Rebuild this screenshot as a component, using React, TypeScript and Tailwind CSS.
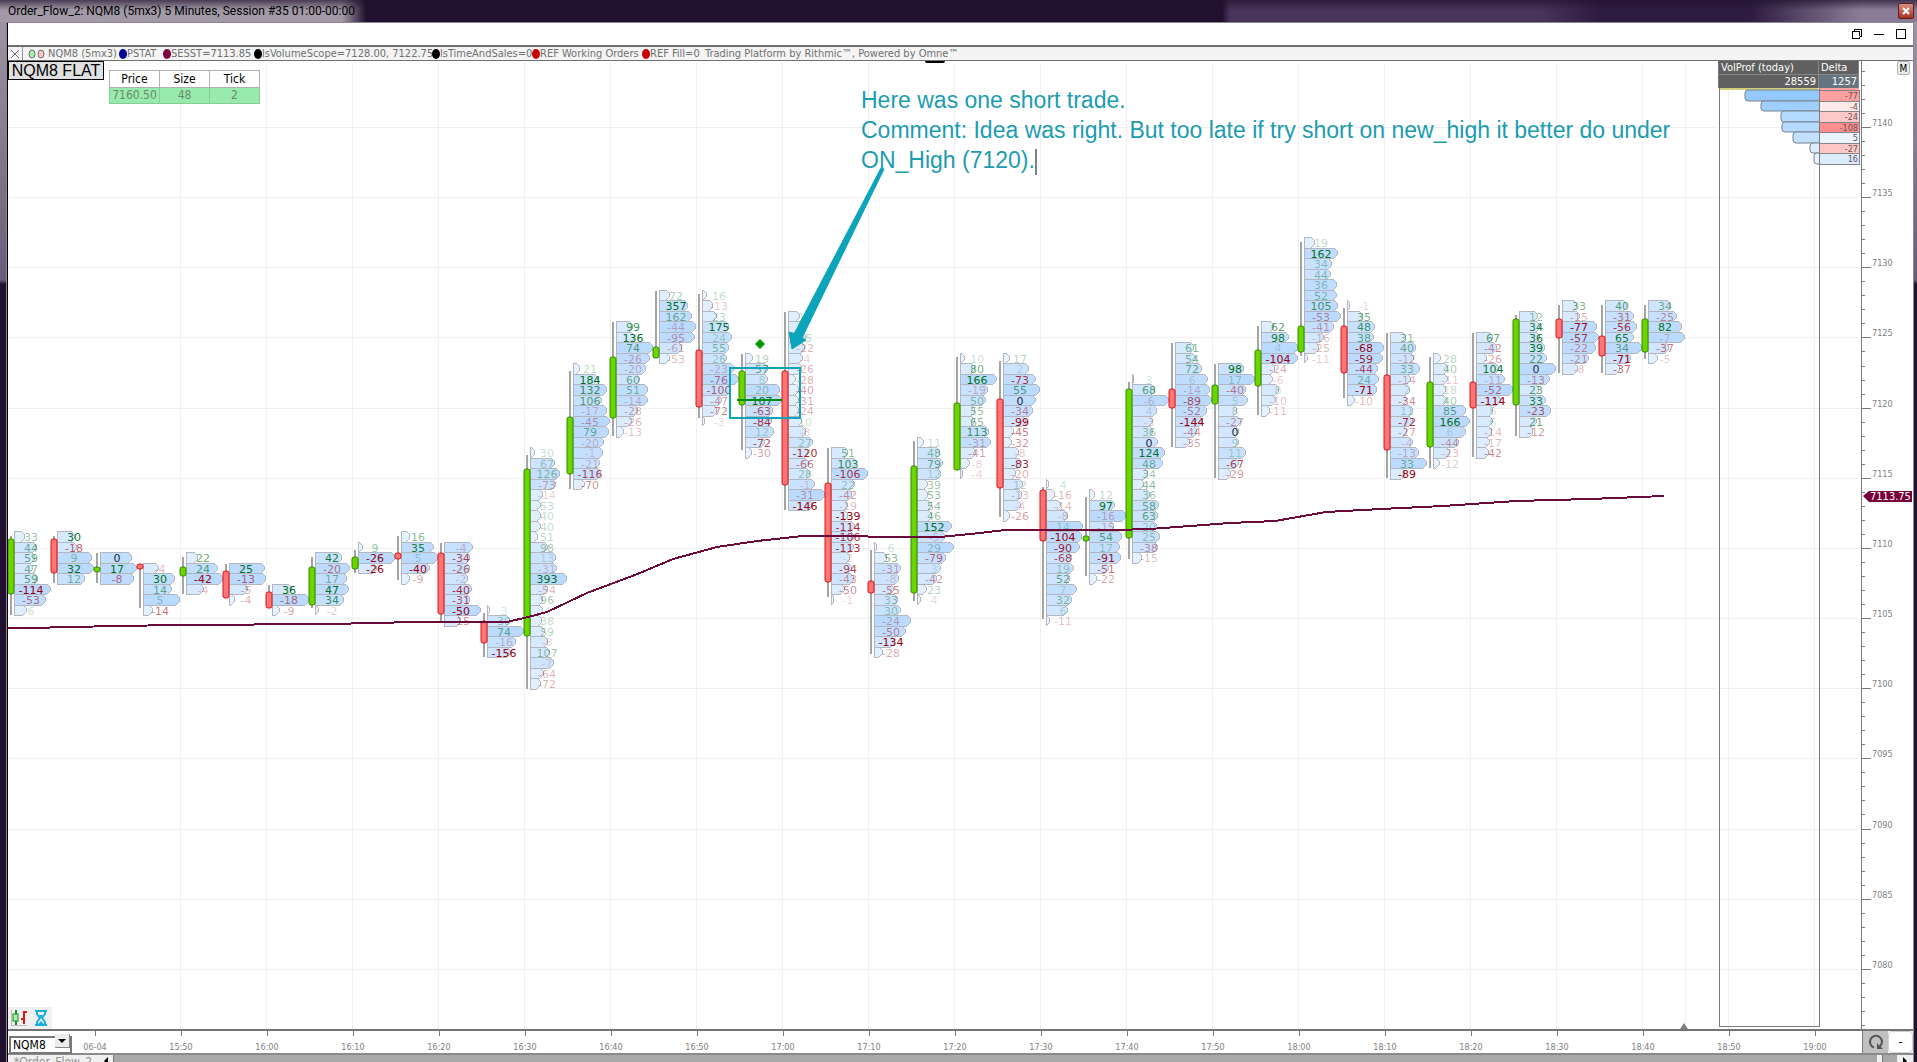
import { Fragment } from "react";

type Row = [delta: number, width: number];

interface Bar {
    up: boolean;
    wick: [number, number];
    body: [number, number];
    top: number;
    rows: Row[];
}

// y values are window pixels, `top` is the index of the first footprint row
const BARS: Bar[] = [
    { up: true, wick: [536, 615], body: [539, 594], top: 28, rows: [[33, 10], [44, 22], [59, 20], [47, 18], [59, 23], [-114, 36], [-53, 31], [6, 12]] },
    { up: false, wick: [536, 583], body: [539, 573], top: 28, rows: [[30, 17], [-18, 19], [9, 34], [32, 36], [12, 27]] },
    { up: true, wick: [553, 583], body: [567, 572], top: 30, rows: [[0, 31], [17, 36], [-8, 33]] },
    { up: false, wick: [565, 608], body: [564, 569], top: 31, rows: [[-4, 15], [30, 31], [14, 28], [5, 36], [-14, 9]] },
    { up: true, wick: [557, 594], body: [567, 576], top: 30, rows: [[22, 11], [24, 31], [-42, 36], [-4, 17]] },
    { up: false, wick: [564, 597], body: [571, 598], top: 31, rows: [[25, 35], [-13, 36], [-5, 18], [-4, 5]] },
    { up: false, wick: [585, 607], body: [592, 608], top: 33, rows: [[36, 19], [-18, 36], [-9, 7]] },
    { up: true, wick: [557, 608], body: [567, 605], top: 30, rows: [[42, 26], [-20, 34], [17, 31], [47, 33], [34, 28], [-2, 3]] },
    { up: true, wick: [550, 573], body: [557, 569], top: 29, rows: [[9, 4], [-26, 36], [-26, 18]] },
    { up: false, wick: [536, 580], body: [553, 559], top: 28, rows: [[16, 8], [35, 32], [5, 36], [-40, 28], [-9, 8]] },
    { up: false, wick: [543, 621], body: [553, 614], top: 29, rows: [[-4, 28], [-34, 25], [-26, 25], [-2, 23], [-40, 27], [-31, 25], [-50, 36], [-15, 16]] },
    { up: false, wick: [613, 657], body: [621, 643], top: 35, rows: [[3, 2], [30, 22], [74, 36], [-16, 28], [-156, 23]] },
    { up: true, wick: [455, 689], body: [469, 636], top: 20, rows: [[30, 4], [67, 24], [126, 29], [-73, 25], [-14, 12], [53, 10], [40, 10], [40, 10], [51, 7], [98, 17], [13, 25], [-31, 26], [393, 36], [-54, 17], [96, 12], [4, 12], [38, 11], [59, 14], [-8, 17], [107, 19], [-7, 23], [-64, 13], [-72, 10]] },
    { up: true, wick: [371, 489], body: [417, 474], top: 12, rows: [[21, 6], [184, 24], [132, 33], [106, 28], [-17, 33], [-45, 36], [79, 35], [-20, 30], [-1, 29], [-21, 26], [-116, 27], [-70, 11]] },
    { up: true, wick: [322, 436], body: [357, 418], top: 8, rows: [[99, 16], [136, 18], [74, 36], [-26, 33], [-20, 29], [60, 23], [51, 31], [-14, 31], [-28, 21], [-26, 15], [-13, 7]] },
    { up: true, wick: [291, 358], body: [347, 358], top: 5, rows: [[72, 10], [357, 28], [162, 32], [-44, 36], [-95, 35], [-61, 22], [-53, 10]] },
    { up: false, wick: [294, 418], body: [350, 407], top: 5, rows: [[16, 4], [-13, 10], [23, 14], [175, 26], [24, 29], [55, 26], [26, 24], [-23, 31], [-76, 36], [-100, 28], [-47, 19], [-72, 14], [-3, 2]] },
    { up: true, wick: [354, 450], body: [371, 405], top: 11, rows: [[19, 7], [57, 22], [8, 22], [20, 34], [107, 36], [-63, 27], [-84, 26], [12, 28], [-72, 19], [-30, 6]] },
    { up: false, wick: [312, 510], body: [371, 485], top: 7, rows: [[12, 11], [2, 14], [25, 17], [-22, 16], [-4, 14], [-26, 13], [-28, 7], [-40, 10], [-31, 10], [-24, 10], [10, 13], [-8, 17], [27, 24], [-120, 19], [-66, 20], [28, 21], [-1, 26], [-31, 36], [-146, 24]] },
    { up: false, wick: [448, 597], body: [483, 582], top: 20, rows: [[51, 16], [103, 25], [-106, 36], [22, 23], [-42, 20], [-19, 16], [-139, 16], [-114, 23], [-106, 22], [-113, 22], [-2, 18], [-94, 20], [-43, 22], [-50, 13], [-1, 2]] },
    { up: false, wick: [550, 654], body: [581, 593], top: 29, rows: [[6, 2], [53, 12], [-31, 26], [-8, 24], [-55, 19], [33, 23], [30, 26], [-24, 36], [-50, 31], [-134, 20], [-28, 8]] },
    { up: true, wick: [441, 601], body: [466, 593], top: 19, rows: [[11, 6], [48, 22], [79, 25], [12, 23], [39, 10], [53, 10], [54, 14], [46, 14], [152, 34], [-5, 27], [29, 36], [-79, 28], [3, 23], [-42, 19], [23, 9], [4, 3]] },
    { up: true, wick: [357, 470], body: [403, 470], top: 11, rows: [[10, 4], [80, 14], [166, 36], [-19, 27], [50, 25], [55, 14], [65, 14], [113, 28], [-31, 30], [-41, 15], [-8, 9], [-4, 2]] },
    { up: false, wick: [361, 517], body: [399, 488], top: 11, rows: [[17, 6], [2, 25], [-73, 32], [55, 36], [0, 32], [-34, 29], [-99, 22], [-45, 10], [-32, 8], [-8, 15], [-83, 18], [-20, 12], [12, 19], [-13, 18], [-4, 17], [-26, 6]] },
    { up: false, wick: [487, 619], body: [490, 541], top: 23, rows: [[4, 2], [-16, 8], [-14, 14], [-8, 21], [14, 36], [-104, 35], [-90, 33], [-68, 25], [19, 27], [52, 23], [7, 30], [32, 25], [6, 21], [-11, 3]] },
    { up: true, wick: [497, 576], body: [536, 541], top: 24, rows: [[12, 5], [97, 25], [-16, 36], [-15, 24], [54, 32], [17, 30], [-91, 31], [-51, 19], [-22, 7]] },
    { up: true, wick: [382, 559], body: [389, 538], top: 13, rows: [[3, 1], [68, 22], [-6, 36], [4, 24], [-3, 20], [36, 20], [0, 25], [124, 32], [48, 30], [34, 15], [44, 11], [36, 17], [58, 26], [63, 25], [20, 24], [25, 27], [-38, 25], [-15, 9]] },
    { up: false, wick: [343, 447], body: [389, 408], top: 10, rows: [[61, 18], [54, 20], [72, 26], [6, 32], [-14, 34], [-89, 36], [-52, 31], [-144, 27], [-44, 21], [-35, 14]] },
    { up: true, wick: [364, 478], body: [385, 404], top: 12, rows: [[98, 25], [17, 36], [-40, 27], [5, 29], [8, 18], [-27, 22], [0, 20], [9, 20], [11, 27], [-67, 20], [-29, 12]] },
    { up: true, wick: [326, 415], body: [350, 386], top: 8, rows: [[62, 12], [98, 27], [4, 36], [-104, 36], [-24, 13], [-6, 11], [8, 17], [-10, 14], [-11, 8]] },
    { up: true, wick: [242, 356], body: [326, 352], top: 0, rows: [[19, 10], [162, 33], [34, 27], [44, 26], [36, 32], [52, 32], [105, 33], [-53, 36], [-41, 29], [-16, 19], [-25, 14], [-11, 3]] },
    { up: false, wick: [308, 398], body: [326, 373], top: 6, rows: [[-1, 2], [35, 15], [48, 27], [38, 26], [-68, 36], [-59, 35], [-44, 30], [24, 31], [-71, 29], [-10, 7]] },
    { up: false, wick: [333, 478], body: [375, 450], top: 9, rows: [[31, 15], [40, 25], [-12, 23], [33, 29], [-14, 20], [2, 19], [-34, 16], [11, 22], [-72, 22], [-27, 16], [-4, 22], [-13, 28], [33, 36], [-89, 14]] },
    { up: true, wick: [357, 468], body: [382, 447], top: 11, rows: [[28, 7], [40, 14], [-11, 14], [18, 12], [40, 13], [85, 32], [166, 36], [6, 32], [-44, 25], [-23, 16], [-12, 6]] },
    { up: false, wick: [333, 457], body: [382, 408], top: 9, rows: [[67, 16], [-42, 20], [-26, 10], [104, 22], [-11, 28], [-52, 36], [-114, 24], [6, 16], [6, 16], [-14, 15], [-17, 13], [-42, 12]] },
    { up: true, wick: [315, 436], body: [319, 405], top: 7, rows: [[12, 18], [34, 20], [36, 20], [39, 25], [22, 27], [0, 36], [-13, 30], [23, 19], [33, 26], [-23, 31], [21, 17], [-12, 13]] },
    { up: false, wick: [305, 373], body: [319, 338], top: 6, rows: [[33, 14], [-15, 17], [-77, 34], [-57, 36], [-22, 33], [-21, 26], [-8, 15]] },
    { up: false, wick: [305, 373], body: [336, 356], top: 6, rows: [[40, 21], [-31, 28], [-56, 31], [65, 28], [34, 36], [-71, 25], [-37, 14]] },
    { up: true, wick: [305, 359], body: [319, 352], top: 6, rows: [[34, 22], [-25, 28], [82, 33], [-7, 36], [-37, 20], [-5, 9]] },
];

const SESSION_LINE =
    "8,628 29,628 72,627 116,626 180,625 330,624 416,622 507,622 528,617 547,612 587,593 640,573 673,559 717,547 757,541 803,536 860,536 875,537 940,537 980,533 1005,530 1115,530 1150,529 1230,523 1275,521 1326,512 1381,509 1443,506 1516,501 1590,499 1664,496";

const TIMES = [
    "06-04", "15:50", "16:00", "16:10", "16:20", "16:30", "16:40", "16:50", "17:00", "17:10", "17:20",
    "17:30", "17:40", "17:50", "18:00", "18:10", "18:20", "18:30", "18:40", "18:50", "19:00",
];

const PROFILE = [
    { delta: -77, width: 73, bar: "#94c9ff", cell: "#ffa0a0" },
    { delta: -4, width: 57, bar: "#9ecfff", cell: "#ffe9e9" },
    { delta: -24, width: 37, bar: "#b4daff", cell: "#ffc9c9" },
    { delta: -108, width: 36, bar: "#b4daff", cell: "#ff8e8e" },
    { delta: 5, width: 25, bar: "#c2e0ff", cell: "#e9f4ff" },
    { delta: -27, width: 8, bar: "#dceeff", cell: "#ffc6c6" },
    { delta: 16, width: 4, bar: "#e4f2ff", cell: "#dcecff" },
];

const LEGEND = [
    { label: "PSTAT", dot: "fill-[#0000a0]", width: "w-[44px]" },
    { label: "SESST=7113.85", dot: "fill-[#800040]", width: "w-[91px]" },
    { label: "lsVolumeScope=7128.00, 7122.75", dot: "fill-black", width: "w-[178px]" },
    { label: "lsTimeAndSales=0", dot: "fill-black", width: "w-[100px]" },
    { label: "REF Working Orders", dot: "fill-[#c80000]", width: "w-[110px]" },
    { label: "REF Fill=0", dot: "fill-[#c80000]", width: "w-[63px]" },
];

const rowY = (row: number) => Math.round(237 + row * 10.5);
const priceY = (price: number) => Math.round(127 + (7140 - price) * 14.03);

const cellFill = (width: number) => {
    const t = width / 36;
    return `rgb(${Math.round(240 - 54 * t)} ${Math.round(247 - 29 * t)} 255)`;
};

const cellPath = (x: number, y: number, w: number, h: number) => {
    const c = Math.min(3, w);
    return `M${x} ${y}h${w - c}l${c} ${c}v${h - 2 * c}l${-c} ${c}h${c - w}z`;
};

const deltaColor = (delta: number) => (delta === 0 ? "#202838" : delta > 0 ? "#00701c" : "#98000c");

const Footprint = ({ bar, x }: { bar: Bar; x: number }) => {
    const max = Math.max(...bar.rows.map(([delta]) => Math.abs(delta)));
    const [bodyTop, bodyBottom] = bar.body;

    return (
        <g>
            {bar.rows.map(([, width], i) => {
                const y = rowY(bar.top + i);
                return (
                    <path
                        key={i}
                        d={cellPath(x + 3, y, width, rowY(bar.top + i + 1) - y)}
                        fill={cellFill(width)}
                        stroke="#b2b6be"
                        shapeRendering="crispEdges"
                    />
                );
            })}
            {bar.rows.map(([delta], i) => (
                <text
                    key={i}
                    x={x + 20}
                    y={rowY(bar.top + i) + 10}
                    textAnchor="middle"
                    fill={deltaColor(delta)}
                    fillOpacity={delta === 0 ? 1 : 0.18 + 0.82 * (Math.abs(delta) / max)}
                >
                    {delta}
                </text>
            ))}
            <rect x={x - 1} y={bar.wick[0]} width={2} height={bar.wick[1] - bar.wick[0]} fill="#a4a4a4" />
            <rect
                x={x - 3}
                y={bodyTop}
                width={6}
                height={bodyBottom - bodyTop}
                rx={2}
                fill={bar.up ? "#69d600" : "#ff7474"}
                stroke={bar.up ? "#338a00" : "#d01818"}
            />
        </g>
    );
};

const Chart = () => (
    <svg className="block h-full w-full" aria-label="NQM8 footprint chart">
        <g transform="translate(-8 -61)">
            <g stroke="#f0f0f0" strokeWidth={1} shapeRendering="crispEdges">
                {Array.from({ length: 18 }, (_, i) => (
                    <line key={i} x1={180 + i * 86} x2={180 + i * 86} y1={63} y2={4000} />
                ))}
                <line x1={1685} x2={1685} y1={63} y2={4000} />
                {Array.from({ length: 13 }, (_, i) => (
                    <line key={i} x1={8} x2={6000} y1={priceY(7140 - i * 5)} y2={priceY(7140 - i * 5)} />
                ))}
            </g>
            <rect x={925} y={59} width={20} height={4} rx={2} />
            <g className="font-['DejaVu_Sans',sans-serif] text-[11px]">
                {BARS.map((bar, i) => (
                    <Footprint key={i} bar={bar} x={11 + i * 43} />
                ))}
            </g>
            <polyline points={SESSION_LINE} fill="none" stroke="#6c0a3c" strokeWidth={2} shapeRendering="crispEdges" />
            <line x1={737} x2={782} y1={400} y2={400} stroke="#008c10" strokeWidth={2} />
            <path d="M760 339l5 5-5 5-5-5z" fill="#009a00" />
            <rect x={730} y={368} width={70} height={50} fill="none" stroke="#0ba4ba" strokeWidth={2} />
            <path d="M881 168L884 169L802 338L806 340L792 349L789 332L794 334Z" fill="#0ba4ba" stroke="#0ba4ba" />
        </g>
    </svg>
);

const OrderTable = () => (
    <table className="absolute top-[9px] left-[101px] w-[151px] table-fixed border-collapse text-center text-[12px] leading-[15px]">
        <thead>
            <tr className="h-[17px] bg-white">
                {["Price", "Size", "Tick"].map((head) => (
                    <th key={head} className="border border-[#b0b0b0] p-0 font-normal text-black">
                        {head}
                    </th>
                ))}
            </tr>
        </thead>
        <tbody>
            <tr className="h-4 bg-[#98ebac] text-[#6b8a70]">
                {["7160.50", "48", "2"].map((cell) => (
                    <td key={cell} className="border border-[#86cd98] p-0">
                        {cell}
                    </td>
                ))}
            </tr>
        </tbody>
    </table>
);

const VolumeProfile = () => (
    <div className="flex w-[143px] shrink-0 flex-col">
        <div className="grid w-[141px] grid-cols-[99px_41px] border-l border-[#777] text-[11px] leading-[13px] text-white">
            <div className="h-[13px] bg-[#606060] pl-0.5 whitespace-nowrap">VolProf (today)</div>
            <div className="h-[13px] border-x border-[#888] bg-[#606060] pl-0.5">Delta</div>
            <div className="h-[14px] border-t border-[#888] bg-[#606060] pr-0.5 text-right">28559</div>
            <div className="h-[14px] border border-b-0 border-[#888] bg-[#667480] pr-px text-right">1257</div>
        </div>
        <svg className="block min-h-0 w-full flex-1" aria-label="Volume profile">
            <g transform="translate(-1718 -88)">
                <g stroke="#f0f0f0" shapeRendering="crispEdges">
                    <line x1={1728} x2={1728} y1={88} y2={4000} />
                    <line x1={1814} x2={1814} y1={88} y2={4000} />
                    {Array.from({ length: 13 }, (_, i) => (
                        <line key={i} x1={1719} x2={1861} y1={priceY(7140 - i * 5)} y2={priceY(7140 - i * 5)} />
                    ))}
                </g>
                <rect x={1720} y={88} width={98} height={2} fill="#cfcf7c" />
                <rect x={1819} y={88} width={40} height={2} fill="#ffa0a0" />
                {PROFILE.map(({ delta, width, bar, cell }, i) => {
                    const y = rowY(i - 14);
                    const h = rowY(i - 13) - y;
                    return (
                        <Fragment key={i}>
                            <rect x={1818 - width} y={y} width={width + 4} height={h} rx={3} fill={bar} stroke="#7a828c" />
                            <rect x={1819} y={y} width={40} height={h} fill={cell} stroke="#858585" shapeRendering="crispEdges" />
                            <text x={1858} y={y + 9} textAnchor="end" fill="#6a5358" className="text-[9px]">
                                {delta}
                            </text>
                        </Fragment>
                    );
                })}
            </g>
            <rect className="h-[calc(100%-1px)]" x={1} y={-2} width={100} fill="none" stroke="#7c7c7c" shapeRendering="crispEdges" />
        </svg>
    </div>
);

const PriceAxis = () => (
    <div className="relative w-[52px] shrink-0 border-l border-[#7c7c7c]">
        <svg className="block h-full w-full" aria-label="Price axis">
            <g transform="translate(-1862 -61)">
                <g stroke="#7c7c7c" shapeRendering="crispEdges">
                    {Array.from({ length: 69 }, (_, i) => {
                        const y = priceY(7144 - i);
                        return <line key={i} x1={1862} x2={i % 5 === 4 ? 1871 : 1865} y1={y} y2={y} />;
                    })}
                </g>
                <g fill="#808080" className="text-[9px]">
                    {Array.from({ length: 13 }, (_, i) => (
                        <text key={i} x={1872} y={priceY(7140 - i * 5) - 1}>
                            {7140 - i * 5}
                        </text>
                    ))}
                </g>
                <path d="M1863 496l6-5h43v11h-43z" fill="#780038" />
                <text x={1870} y={500} fill="#fff" className="text-[11px]">
                    7113.75
                </text>
            </g>
        </svg>
        <button className="absolute top-0 right-[3px] h-[14px] w-[13px] rounded-xs border border-[#b0b0b0] bg-[#ececec] text-[10px] leading-[11px] text-black">
            M
        </button>
    </div>
);

const ChartTools = () => (
    <div className="absolute bottom-0 left-0 flex h-[22px] w-11 items-center gap-2 bg-[#f0f0f0] pl-[3px]">
        <button aria-label="Chart style">
            <svg className="block h-4 w-4" viewBox="0 0 16 16">
                <path d="M0 0v16h16" fill="none" stroke="#888" />
                <path d="M5 0v15" stroke="#109020" strokeWidth="2" />
                <rect x="2" y="4" width="5" height="7" fill="#b0e8b0" stroke="#109020" />
                <path d="M13 1v13M13 2h3M10 9h3" fill="none" stroke="#e01818" strokeWidth="2" />
            </svg>
        </button>
        <button aria-label="Loading">
            <svg className="block h-4 w-3" viewBox="0 0 12 16">
                <path d="M0 0h12v2H0zM0 14h12v2H0z" fill="#18b0d8" />
                <path d="M2 2v2l3 4-3 4v2M10 2v2L7 8l3 4v2" fill="none" stroke="#18b0d8" strokeWidth="2" />
                <path d="M3 14l3-3 3 3zM4 5h4L6 8z" fill="#18b0d8" />
            </svg>
        </button>
    </div>
);

const TimeAxis = () => (
    <div className="flex h-6 shrink-0 border-t-2 border-[#747474] bg-white">
        <div className="relative mt-px ml-px h-[18px] w-[63px] shrink-0">
            <select
                aria-label="Symbol"
                className="h-full w-full appearance-none border-2 border-[#787878] bg-white pl-0.5 text-[12px] leading-[14px] text-black"
                defaultValue="NQM8"
            >
                <option>NQM8</option>
            </select>
            <span className="pointer-events-none absolute top-0.5 right-0.5 flex h-[14px] w-[15px] items-center justify-center border-r border-b border-[#888] bg-[#ececec]">
                <svg className="h-1 w-2" viewBox="0 0 8 4">
                    <path d="M0 0h8L4 4z" />
                </svg>
            </span>
        </div>
        <svg className="block h-full min-w-0 flex-1 text-[9px]" aria-label="Time axis">
            <g transform="translate(-72 -1031)">
                {TIMES.map((time, i) => (
                    <Fragment key={time}>
                        <line x1={95 + i * 86} x2={95 + i * 86} y1={1031} y2={1036} stroke="#7c7c7c" shapeRendering="crispEdges" />
                        <text x={95 + i * 86} y={1050} textAnchor="middle" fill="#808080">
                            {time}
                        </text>
                    </Fragment>
                ))}
            </g>
        </svg>
        <button aria-label="Reset scale" className="flex w-[26px] items-center justify-center border-l border-[#7c7c7c] bg-[#c0c0c0]">
            <svg className="h-4 w-4" viewBox="0 0 16 16">
                <path d="M6 13.500A6 6 0 1 1 11 13" fill="none" stroke="#555" strokeWidth="2" />
                <path d="M9 9v6h6z" fill="#555" />
            </svg>
        </button>
        <button aria-label="Zoom out" className="w-[25px] rounded border border-[#d0d0d0] bg-white text-[12px] leading-[18px] text-black">
            -
        </button>
    </div>
);

const TitleBar = () => (
    <header className="flex h-[22px] shrink-0 items-center justify-between bg-[linear-gradient(180deg,#21112eb0_0,#21112e00_10px),linear-gradient(90deg,#a199a6_0,#a199a6_342px,#21112e_366px,#21112e_1222px,#49345b_1230px,#49345b_1540px,#2e1b40_1600px,#2e1b40_1750px,#8a7c96_1860px)] pr-[3px] pl-2 text-black">
        <h1 className="font-['Roboto',sans-serif] text-[12px] leading-4 whitespace-nowrap">
            Order_Flow_2: NQM8 (5mx3) 5 Minutes, Session #35 01:00-00:00
        </h1>
        <button
            aria-label="Close"
            className="flex h-4 w-4 items-center justify-center rounded-xs border border-[#5a2020] bg-linear-to-b from-[#d89080] to-[#a83020]"
        >
            <svg className="h-2 w-2" viewBox="0 0 8 8">
                <path d="M1 1l6 6M7 1L1 7" stroke="#fff" strokeWidth="2" />
            </svg>
        </button>
    </header>
);

const WindowControls = () => (
    <div className="flex h-[22px] shrink-0 items-center justify-end gap-3 bg-white pr-[7px]">
        <button aria-label="Restore">
            <svg className="block h-[10px] w-[10px]" viewBox="0 0 10 10" shapeRendering="crispEdges">
                <path fillRule="evenodd" d="M2 0h8v8H7V7h2V1H3v1H2zM0 2h8v8H0zM1 3v6h6V3z" />
            </svg>
        </button>
        <button aria-label="Minimize">
            <svg className="block h-[10px] w-[10px]" viewBox="0 0 10 10">
                <path d="M0 5h10v1H0z" />
            </svg>
        </button>
        <button aria-label="Maximize" className="h-[10px] w-[10px] border border-black" />
    </div>
);

const Legend = () => (
    <div className="flex h-4 shrink-0 items-center border-t-2 border-b border-[#707070] bg-[#f4f4f4] text-[11px] leading-[13px] whitespace-nowrap text-[#707070]">
        <button aria-label="Close panel" className="flex h-full w-[15px] items-center justify-center border-r border-[#999]">
            <svg className="h-2 w-2" viewBox="0 0 8 8">
                <path d="M0 0l8 8M8 0L0 8" stroke="#707070" />
            </svg>
        </button>
        <div className="flex w-[96px] items-center gap-px pl-[5px]">
            <svg className="mr-0.5 h-[10px] w-[17px]" viewBox="0 0 17 10" stroke="#707070">
                <ellipse cx="4" cy="5" rx="3" ry="4" fill="#a8f0a8" />
                <ellipse cx="13" cy="5" rx="3" ry="4" fill="#ffc4c4" />
            </svg>
            NQM8 (5mx3)
        </div>
        {LEGEND.map(({ label, dot, width }) => (
            <div key={label} className={`flex items-center ${width}`}>
                <svg className={`h-[10px] w-2 shrink-0 ${dot}`} viewBox="0 0 8 10">
                    <ellipse cx="4" cy="5" rx="4" ry="5" />
                </svg>
                {label}
            </div>
        ))}
        <span>Trading Platform by Rithmic™, Powered by Omne™</span>
    </div>
);

const SheetTabs = () => (
    <div className="flex h-[9px] shrink-0 overflow-hidden border-t-2 border-[#8a8a8a] bg-[#f0f0f0] text-[#909090]">
        <button className="w-[90px] shrink-0 text-[12px] leading-[14px]">*Order_Flow_2</button>
        <button aria-label="Scroll left" className="flex h-4 w-4 shrink-0 items-start justify-center border-r border-[#777] bg-[#f0f0f0] pt-0.5">
            <svg className="h-2 w-1" viewBox="0 0 4 8">
                <path d="M4 0v8L0 4z" />
            </svg>
        </button>
        <div className="h-4 flex-1 bg-[#a8a8a8]" />
        <div className="h-4 w-[6px] border-r border-[#777] bg-[#f0f0f0]" />
        <div className="h-4 w-[14px] bg-[#a8a8a8]" />
        <button aria-label="Scroll right" className="flex h-4 w-4 shrink-0 items-start justify-center bg-[#f0f0f0] pt-0.5">
            <svg className="h-2 w-1" viewBox="0 0 4 8">
                <path d="M0 0v8l4-4z" />
            </svg>
        </button>
    </div>
);

const App = () => {
    return (
        <div className="flex h-screen flex-col overflow-hidden bg-[linear-gradient(180deg,#a199a6_0,#6a5c78_280px,#21112e_284px)] font-['DejaVu_Sans_Condensed','DejaVu_Sans',sans-serif]">
            <TitleBar />
            <main className="mr-[3px] ml-[6px] flex min-h-0 flex-1 flex-col border-x border-t border-[#8d8596] bg-white">
                <div className="flex min-h-0 flex-1 flex-col border-l border-black">
                    <WindowControls />
                    <Legend />
                    <div className="flex min-h-0 flex-1">
                        <div className="relative min-w-0 flex-1 overflow-hidden">
                            <Chart />
                            <div className="absolute top-0 left-0 flex h-[19px] w-24 items-center justify-center border border-black bg-[#e0e0e0] font-['Liberation_Sans',sans-serif] text-[16px] leading-4 whitespace-nowrap text-black">
                                NQM8 FLAT
                            </div>
                            <OrderTable />
                            <p className="absolute top-6 left-[853px] font-['Liberation_Sans',sans-serif] text-[23px] leading-[30px] whitespace-nowrap text-[#1c9cb0]">
                                Here was one short trade.
                                <br />
                                Comment: Idea was right. But too late if try short on new_high it better do under
                                <br />
                                ON_High (7120).
                                <span className="inline-block h-[26px] w-0.5 bg-[#808080] align-middle" />
                            </p>
                            <ChartTools />
                            <svg className="absolute bottom-0 left-[1672px] h-[6px] w-2" viewBox="0 0 8 6">
                                <path d="M4 0l4 6H0z" fill="#808080" />
                            </svg>
                        </div>
                        <VolumeProfile />
                        <PriceAxis />
                    </div>
                    <TimeAxis />
                    <SheetTabs />
                </div>
            </main>
        </div>
    );
};

export default App;
